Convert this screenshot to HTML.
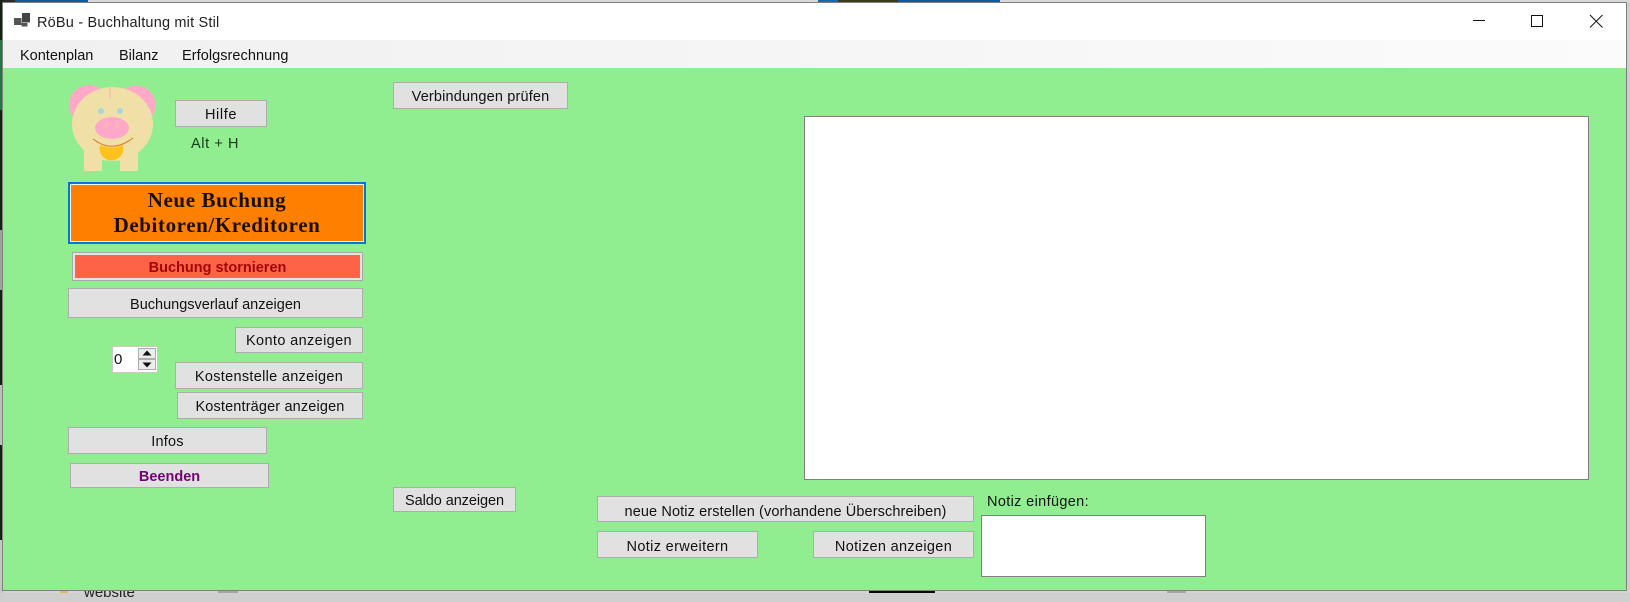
<!DOCTYPE html>
<html lang="de">
<head>
<meta charset="utf-8">
<title>RöBu - Buchhaltung mit Stil</title>
<style>
html,body{margin:0;padding:0;width:1630px;height:593px;overflow:hidden;background:#cfcfcf;font-family:"Liberation Sans",sans-serif;color:#111}
.a{position:absolute;box-sizing:border-box}
.b{position:absolute;box-sizing:border-box;background:#e1e1e1;border:1px solid #adadad;display:flex;align-items:center;justify-content:center;font-size:14.5px;white-space:nowrap;padding-top:3px}
.p2{padding-top:2px}
.p4{padding-top:5px}
.t{position:absolute;white-space:nowrap;font-size:14.5px;line-height:18px}
.box{position:absolute;box-sizing:border-box;background:#fff;border:1px solid #808080}
</style>
</head>
<body>
<!-- desktop leaks -->
<div class="a" style="left:0;top:0;width:1630px;height:3px;background:#d8d8d8"></div>
<div class="a" style="left:0;top:0;width:15px;height:3px;background:#2a2a2a"></div>
<div class="a" style="left:15px;top:0;width:73px;height:3px;background:#0e5a9c"></div>
<div class="a" style="left:818px;top:0;width:20px;height:3px;background:#1b66b0"></div>
<div class="a" style="left:838px;top:0;width:60px;height:3px;background:#3a3a20"></div>
<div class="a" style="left:898px;top:0;width:102px;height:3px;background:#0e5a9c"></div>
<div class="a" style="left:0;top:0;width:3px;height:593px;background:#12240f"></div>
<div class="a" style="left:0;top:40px;width:3px;height:70px;background:#1e7a40"></div>
<div class="a" style="left:0;top:230px;width:3px;height:60px;background:#9aa49a"></div>
<div class="a" style="left:0;top:385px;width:3px;height:60px;background:#b8c0b8"></div>
<div class="a" style="left:0;top:540px;width:3px;height:53px;background:#c0c8c0"></div>
<div class="a" style="left:3px;top:590px;width:1627px;height:3px;background:#d4d4d4"></div>
<div class="a" style="left:60px;top:590px;width:8px;height:3px;background:#e0b860"></div>
<div class="a" style="left:218px;top:590px;width:20px;height:3px;background:#a6a6a6"></div>
<div class="a" style="left:869px;top:590px;width:66px;height:3px;background:#0a0a0a"></div>
<div class="a" style="left:1167px;top:590px;width:19px;height:3px;background:#a6a6a6"></div>
<div class="t" style="left:84px;top:584px;font-size:15px;color:#222">website</div>

<!-- window -->
<div class="a" style="left:3px;top:3px;width:1623px;height:587px;background:#90ee90;box-shadow:0 0 0 1px #808080"></div>
<div class="a" style="left:3px;top:3px;width:1623px;height:37px;background:#fff"></div>
<div class="a" style="left:3px;top:40px;width:1623px;height:28px;background:linear-gradient(90deg,#f0f0f0,#fbfbfb)"></div>

<svg class="a" style="left:14px;top:12px" width="18" height="16" viewBox="0 0 18 16">
<rect x="0" y="6" width="7.500" height="7" fill="#555"/><rect x="8" y="1" width="8" height="9.500" fill="#444"/><rect x="7.500" y="11" width="6" height="3.500" fill="#555"/>
</svg>
<div class="t" style="left:37px;top:14px;font-size:14.5px;letter-spacing:.19px;color:#222">RöBu - Buchhaltung mit Stil</div>

<svg class="a" style="left:1460px;top:8px" width="160" height="30" viewBox="0 0 160 30" fill="none" stroke="#111" stroke-width="1">
<path d="M13 12.500H25"/>
<rect x="71.500" y="7.500" width="11" height="11"/>
<path d="M130 7L142.500 19.500M142.500 7L130 19.500"/>
</svg>

<div class="t" style="left:20px;top:47px">Kontenplan</div>
<div class="t" style="left:119px;top:47px">Bilanz</div>
<div class="t" style="left:182px;top:47px;letter-spacing:.06px">Erfolgsrechnung</div>

<!-- pig -->
<svg class="a" style="left:60px;top:75px" width="110" height="100" viewBox="60 75 110 100">
<circle cx="89" cy="105" r="20" fill="#ffa8c8"/>
<circle cx="136" cy="105" r="19.500" fill="#ffa8c8"/>
<rect x="84" y="140" width="18" height="31" fill="#f0e0a8"/>
<rect x="120" y="140" width="18" height="31" fill="#f0e0a8"/>
<ellipse cx="112.500" cy="124" rx="40.500" ry="37" fill="#f0e0a8"/>
<path d="M110 87V99" stroke="#f4b0b0" stroke-width="1"/>
<circle cx="101" cy="111" r="3" fill="#a8d8dc"/>
<circle cx="120" cy="111" r="3" fill="#a8d8dc"/>
<ellipse cx="112" cy="128" rx="17" ry="11" fill="#ffa8c8"/>
<ellipse cx="106" cy="125" rx="1.500" ry="3" fill="#f4b8b8"/>
<ellipse cx="117" cy="125" rx="1.500" ry="3" fill="#f4b8b8"/>
<path d="M100 145Q112 150 123 145A12 12 0 1 1 100 145z" fill="#ffc21c"/>
<path d="M93 139Q112 154 133 138" fill="none" stroke="#d87820" stroke-width="1"/>
</svg>

<div class="b" style="left:175px;top:100px;width:92px;height:27px;letter-spacing:.6px">Hilfe</div>
<div class="t" style="left:191px;top:135px;letter-spacing:.6px;color:#143c14">Alt + H</div>
<div class="b" style="left:393px;top:82px;width:175px;height:27px;letter-spacing:.16px">Verbindungen prüfen</div>

<div class="a" style="left:68px;top:182px;width:298px;height:62px;background:#ff8000;border:2px solid #0078d7;box-shadow:inset 0 0 0 1px #f4f4f4;display:flex;align-items:center;justify-content:center;text-align:center;font-family:'Liberation Serif',serif;font-weight:bold;font-size:21px;line-height:25px;color:#1a1000;letter-spacing:.6px">Neue Buchung<br>Debitoren/Kreditoren</div>

<div class="b p2" style="left:72px;top:252px;width:291px;height:29px;background:#ff6347;border:1px solid #a8a8a8;box-shadow:inset 0 0 0 2px #e4e4e4;color:#a00808;font-weight:bold">Buchung stornieren</div>
<div class="b" style="left:68px;top:288px;width:295px;height:30px">Buchungsverlauf anzeigen</div>
<div class="b p2" style="left:235px;top:327px;width:128px;height:26px;letter-spacing:.37px">Konto anzeigen</div>

<div class="a" style="left:112px;top:346px;width:46px;height:27px;background:#fff;border:1px solid #c8c8c8;"></div>
<div class="t" style="left:114px;top:351px;font-size:15px">0</div>
<div class="a" style="left:138px;top:348px;width:18px;height:11px;background:#ececec;border:1px solid #adadad"></div>
<div class="a" style="left:138px;top:359px;width:18px;height:11px;background:#ececec;border:1px solid #adadad"></div>
<svg class="a" style="left:138px;top:348px" width="18" height="22" viewBox="0 0 18 22" fill="#111"><path d="M9 2.500L13.500 7.500H4.500z"/><path d="M9 19.500L13.500 14.500H4.500z"/></svg>

<div class="b p2" style="left:175px;top:362px;width:188px;height:27px;letter-spacing:.3px">Kostenstelle anzeigen</div>
<div class="b p2" style="left:177px;top:392px;width:186px;height:27px;letter-spacing:.15px">Kostenträger anzeigen</div>
<div class="b" style="left:68px;top:427px;width:199px;height:27px;letter-spacing:.2px">Infos</div>
<div class="b p2" style="left:70px;top:463px;width:199px;height:25px;color:#760076;font-weight:bold">Beenden</div>

<div class="b" style="left:393px;top:487px;width:123px;height:25px;letter-spacing:-.07px">Saldo anzeigen</div>
<div class="b p4" style="left:597px;top:496px;width:377px;height:26px;letter-spacing:.11px">neue Notiz erstellen (vorhandene Überschreiben)</div>
<div class="b p4" style="left:597px;top:531px;width:161px;height:27px;letter-spacing:.35px">Notiz erweitern</div>
<div class="b p4" style="left:813px;top:531px;width:161px;height:27px;letter-spacing:.32px">Notizen anzeigen</div>

<div class="t" style="left:987px;top:493px;letter-spacing:.35px">Notiz einfügen:</div>
<div class="box" style="left:804px;top:116px;width:785px;height:364px"></div>
<div class="box" style="left:981px;top:515px;width:225px;height:62px"></div>
</body>
</html>
